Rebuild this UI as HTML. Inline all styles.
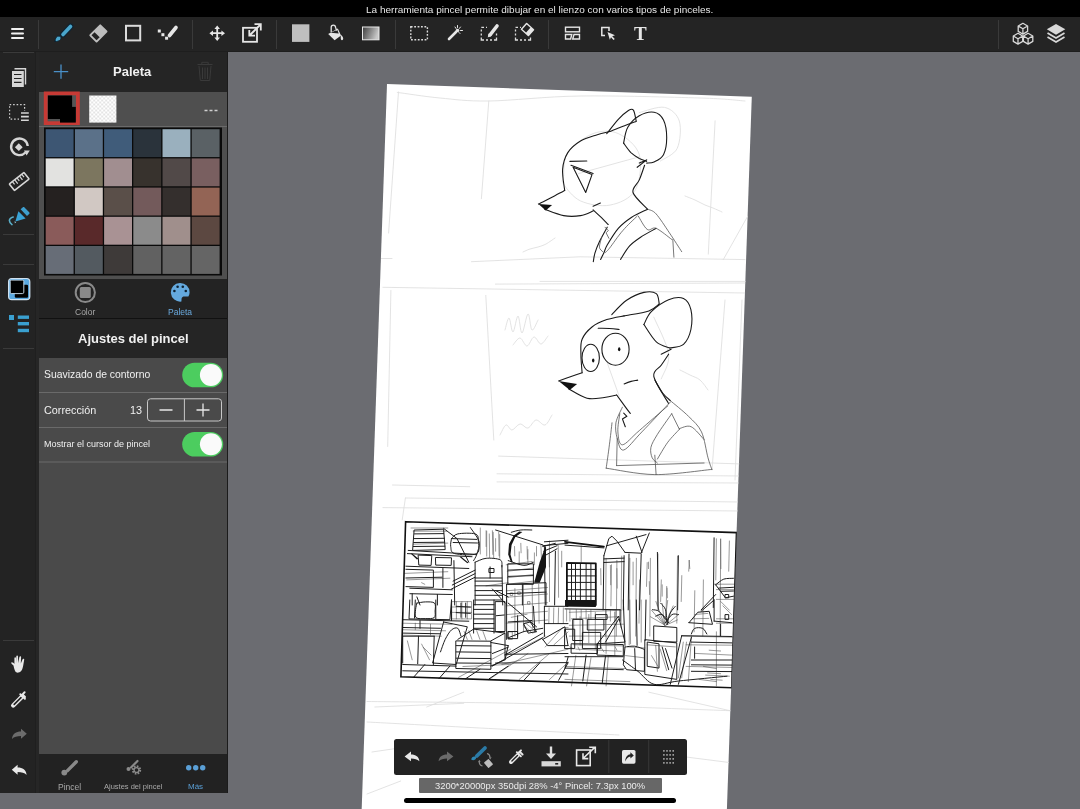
<!DOCTYPE html>
<html><head><meta charset="utf-8">
<style>
*{margin:0;padding:0;box-sizing:border-box}
html,body{width:1080px;height:809px;overflow:hidden;background:#6b6c71;font-family:"Liberation Sans",sans-serif}
.a{position:absolute}
svg{position:absolute;overflow:visible}
.txt{position:absolute;white-space:nowrap;line-height:1;will-change:transform}
</style></head><body>

<!-- canvas paper -->
<div class="a" id="paper" style="left:387px;top:84px;width:365px;height:800px;background:#fff;transform-origin:0 0;transform:rotate(2deg)">
</div>

<!--CANVAS--><svg class="a" id="cv" style="left:0;top:0" width="1080" height="809" viewBox="0 0 1080 809">
<defs><clipPath id="pc"><path d="M387 84L752 97L727.3 809L362.2 809Z"/></clipPath></defs>
<g clip-path="url(#pc)">
<g fill="none" stroke="#dedede" stroke-width="0.85" stroke-linecap="round"><path d="M397.3 92.4 C404.4 93.3 424.8 96.6 440.0 98.0 C455.2 99.4 465.5 101.3 488.8 101.0 C512.1 100.7 544.8 96.5 580.0 96.0 C615.2 95.5 672.5 97.2 700.0 98.0 C727.5 98.8 737.5 100.5 745.0 101.0"/><path d="M398.5 92.0 L388.6 233.0"/><path d="M488.8 101.0 L481.4 198.7"/><path d="M471.5 261.7 L580.0 256.8 L745.0 259.6"/><path d="M380.0 258.5 L392.0 258.5"/><path d="M715.1 120.8 L708.3 254.1"/><path d="M747.8 216.0 L723.3 259.6"/><path d="M540.0 281.4 L750.5 281.4"/><path d="M523.0 252.0 C524.2 251.5 527.5 249.8 530.0 249.0 C532.5 248.2 535.3 247.8 538.0 247.0 C540.7 246.2 543.2 245.5 546.0 244.0 C548.8 242.5 553.5 239.0 555.0 238.0"/><path d="M685.0 196.0 C686.7 196.7 691.7 198.5 695.0 200.0 C698.3 201.5 702.0 203.7 705.0 205.0 C708.0 206.3 710.2 206.8 713.0 208.0 C715.8 209.2 720.5 211.3 722.0 212.0"/><path d="M639.3 112.6 C643.5 111.7 657.9 106.0 664.6 107.4 C671.2 108.8 677.2 114.2 679.3 121.0 C681.4 127.9 680.3 141.7 677.2 148.4 C674.0 155.0 663.2 158.9 660.4 161.0"/><path d="M563.6 175.7 C564.3 170.4 562.9 159.6 567.8 152.6 C572.8 145.6 584.7 136.8 593.1 133.6 C601.5 130.5 610.6 130.1 618.3 133.6 C626.0 137.1 636.5 145.2 639.3 154.7 C642.1 164.1 640.0 182.0 635.1 190.4 C630.2 198.8 619.0 203.4 609.9 205.1 C600.8 206.9 588.2 204.4 580.5 200.9 C572.8 197.4 566.4 188.3 563.6 184.1 C560.8 179.9 562.9 181.0 563.6 175.7"/><path d="M578.4 173.6 L639.3 156.8"/><path d="M382.9 287.3 L745.0 293.0"/><path d="M495.4 284.1 L745.0 283.0"/><path d="M390.9 290.5 L387.7 446.5"/><path d="M485.8 295.4 L493.8 440.0"/><path d="M498.6 456.1 L742.0 464.0"/><path d="M497.0 473.8 L742.0 476.0"/><path d="M497.0 481.9 L742.0 483.0"/><path d="M392.5 485.0 L469.7 486.7"/><path d="M405.4 498.0 L740.0 502.0"/><path d="M382.9 507.6 L740.0 511.0"/><path d="M405.4 498.0 L402.2 520.0"/><path d="M725.0 300.0 L712.0 470.0"/><path d="M742.0 300.0 L735.0 480.0"/><path d="M505.0 330.0 C505.7 328.0 507.7 317.7 509.0 318.0 C510.3 318.3 511.5 332.3 513.0 332.0 C514.5 331.7 516.5 315.8 518.0 316.0 C519.5 316.2 520.3 333.3 522.0 333.0 C523.7 332.7 526.3 314.5 528.0 314.0 C529.7 313.5 530.3 329.0 532.0 330.0 C533.7 331.0 537.0 321.7 538.0 320.0"/><path d="M513.0 345.0 C514.2 343.8 517.7 337.8 520.0 338.0 C522.3 338.2 524.7 346.2 527.0 346.0 C529.3 345.8 531.7 337.3 534.0 337.0 C536.3 336.7 538.7 344.2 541.0 344.0 C543.3 343.8 546.8 337.3 548.0 336.0"/><path d="M500.0 435.0 C501.0 433.3 504.0 425.8 506.0 425.0 C508.0 424.2 509.7 430.2 512.0 430.0 C514.3 429.8 517.3 424.3 520.0 424.0 C522.7 423.7 525.3 428.7 528.0 428.0 C530.7 427.3 533.2 420.5 536.0 420.0 C538.8 419.5 542.3 425.8 545.0 425.0 C547.7 424.2 550.8 416.7 552.0 415.0"/><path d="M680.0 370.0 C681.7 370.8 686.7 373.3 690.0 375.0 C693.3 376.7 697.0 377.5 700.0 380.0 C703.0 382.5 706.7 388.3 708.0 390.0"/><path d="M653.8 317.1 C656.3 323.3 667.4 343.9 668.6 354.2 C669.9 364.5 662.5 374.8 661.2 378.9"/><path d="M606.8 361.6 L619.2 396.2"/><path d="M367.0 701.5 C389.2 701.8 461.2 702.2 500.0 703.0 C538.8 703.8 561.7 704.7 600.0 706.0 C638.3 707.3 708.3 709.9 730.0 710.7"/><path d="M367.0 722.0 C385.8 723.0 438.0 725.8 480.0 728.0 C522.0 730.2 595.8 733.8 619.0 735.0"/><path d="M463.7 692.2 L426.7 707.0"/><path d="M374.8 707.0 L463.7 703.3"/><path d="M648.9 692.2 L730.0 710.7"/><path d="M367.0 794.0 L400.7 781.0"/><path d="M686.0 757.0 L730.0 762.6"/><path d="M372.0 752.0 L420.0 745.0"/></g>
<g fill="none" stroke="#555" stroke-width="0.6" stroke-linecap="round"><path d="M486.1 530.7 L486.1 546.5"/><path d="M489.3 533.9 L489.6 557.5"/><path d="M492.4 530.7 L492.8 554.4"/><path d="M495.6 538.6 L495.6 551.2"/><path d="M498.7 532.3 L499.1 555.9"/><path d="M514.5 546.5 L514.8 555.9"/><path d="M520.8 543.3 L521.1 552.8"/><path d="M527.1 546.5 L527.4 559.1"/><path d="M536.5 546.5 L536.5 555.9"/><path d="M561.7 551.2 L561.7 566.9"/><path d="M549.1 554.4 L549.4 566.9"/><path d="M486.1 585.8 L508.2 582.7"/><path d="M421.6 582.7 L424.8 584.3"/><path d="M648.5 562.1 L648.5 568.6"/><path d="M689.0 560.5 L689.8 568.6"/><path d="M662.2 584.8 L662.2 596.2"/><path d="M667.1 588.1 L667.4 597.8"/><path d="M610.4 565.4 L610.7 584.8"/><path d="M616.9 568.6 L617.2 588.1"/><path d="M633.1 562.1 L633.1 584.8"/><path d="M649.3 581.6 L649.6 594.5"/><path d="M581.2 545.9 L581.2 562.1"/><path d="M600.7 568.6 L601.0 584.8"/><path d="M720.6 539.4 L720.9 568.6"/><path d="M407.4 640.9 L412.2 659.8"/><path d="M421.6 644.1 L429.5 659.8"/><path d="M423.2 647.2 L431.1 655.1"/><path d="M464.1 631.5 L467.3 639.4"/><path d="M468.8 630.7 L472.0 639.4"/><path d="M476.7 630.7 L479.9 639.4"/><path d="M483.0 631.5 L486.1 640.1"/><path d="M549.1 607.9 L548.8 623.6"/><path d="M553.8 607.9 L553.5 623.6"/><path d="M558.6 607.9 L558.2 623.6"/><path d="M563.3 607.9 L563.3 623.6"/><path d="M523.9 626.8 L528.6 631.5"/><path d="M511.3 617.3 L527.1 614.2"/><path d="M506.2 564.8 L532.2 561.5"/><path d="M507.3 571.3 L533.3 568.0"/><path d="M507.3 577.8 L533.3 574.5"/><path d="M507.3 584.3 L534.4 581.0"/><path d="M506.2 590.8 L547.4 587.5"/><path d="M506.2 597.3 L547.4 594.0"/><path d="M506.2 605.9 L547.4 602.7"/><path d="M506.2 614.6 L547.4 611.3"/><path d="M506.2 623.2 L547.4 620.0"/><path d="M514.9 588.6 L514.9 636.2"/><path d="M523.5 584.3 L523.5 631.9"/><path d="M532.2 584.3 L532.6 627.6"/><path d="M538.7 584.3 L539.1 623.2"/><path d="M510.6 592.9 L512.7 592.9 L512.7 595.5 L510.6 595.5Z"/><path d="M518.1 591.8 L520.3 591.8 L520.3 594.4 L518.1 594.4Z"/><path d="M527.9 601.6 L530.0 601.6 L530.0 604.2 L527.9 604.2Z"/><path d="M508.8 631.9 L512.3 631.9 L512.3 639.5 L508.8 639.5Z"/><path d="M525.7 623.2 L536.5 631.9 L532.2 633.0 L523.5 625.4Z"/><path d="M452.1 601.6 L471.6 601.6 L471.6 618.9 L452.1 618.9Z"/><path d="M456.4 601.6 L456.4 618.9"/><path d="M461.9 601.6 L461.9 618.9"/><path d="M467.3 601.6 L467.3 618.9"/><path d="M452.1 607.0 L471.6 607.0"/><path d="M452.1 612.4 L471.6 612.4"/><path d="M411.0 528.0 L447.8 528.0"/><path d="M413.2 531.2 L446.7 531.2"/><path d="M413.2 544.2 L447.8 543.1"/><path d="M404.5 573.4 L447.8 571.7"/><path d="M406.7 579.9 L449.9 578.2"/><path d="M402.3 623.2 L452.1 624.3"/><path d="M402.3 629.7 L445.6 630.8"/><path d="M402.3 635.1 L441.3 636.2"/><path d="M415.3 623.2 L415.3 629.7"/><path d="M430.5 624.3 L430.5 635.1"/><path d="M480.3 528.0 L480.3 554.0"/><path d="M486.7 531.2 L486.7 556.1"/><path d="M493.2 532.3 L493.7 558.3"/><path d="M499.7 534.5 L499.7 558.3"/><path d="M540.9 545.3 L541.9 569.1"/><path d="M549.5 541.0 L549.5 601.6"/><path d="M558.2 545.3 L558.6 597.3"/><path d="M519.2 551.8 L519.2 564.8"/><path d="M527.9 549.6 L527.9 562.6"/><path d="M534.4 552.9 L534.4 564.8"/><path d="M458.6 677.3 L510.6 649.2"/><path d="M488.9 679.5 L527.9 653.5"/><path d="M519.2 679.5 L549.5 653.5"/><path d="M549.5 679.5 L568.1 662.2"/><path d="M506.2 655.7 L545.2 636.2"/><path d="M501.9 664.4 L568.1 649.2"/><path d="M462.9 666.5 L510.6 664.4"/><path d="M553.8 644.9 L568.1 631.9"/><path d="M545.2 647.0 L562.5 627.6 L568.1 627.6"/><path d="M606.1 558.3 L605.4 636.1"/><path d="M611.5 564.8 L610.9 605.9"/><path d="M616.9 560.4 L616.3 636.1"/><path d="M621.7 556.1 L621.0 627.5"/><path d="M629.9 558.3 L629.2 644.8"/><path d="M636.4 558.3 L635.7 636.1"/><path d="M639.6 579.9 L639.0 623.2"/><path d="M647.2 562.6 L646.5 586.4"/><path d="M650.4 558.3 L649.8 636.1"/><path d="M658.0 553.9 L657.4 605.9"/><path d="M661.3 579.9 L660.6 601.5"/><path d="M666.7 586.4 L666.0 616.7"/><path d="M677.5 556.1 L676.8 623.2"/><path d="M681.8 575.6 L681.2 601.5"/><path d="M689.4 560.4 L688.7 571.2"/><path d="M694.8 590.7 L694.1 631.8"/><path d="M703.4 579.9 L702.8 636.1"/><path d="M716.4 538.8 L715.8 579.9"/><path d="M720.7 538.8 L720.1 636.1"/><path d="M729.4 541.0 L728.7 571.2"/><path d="M664.5 625.3 L651.5 610.2"/><path d="M664.5 625.3 L655.9 601.5"/><path d="M664.5 625.3 L662.3 603.7"/><path d="M664.5 624.2 L667.7 600.4"/><path d="M664.9 624.2 L673.2 605.9"/><path d="M665.6 625.3 L678.6 614.5"/><path d="M665.6 625.3 L677.5 619.9"/><path d="M663.4 624.2 L650.4 616.7"/><path d="M663.4 623.2 L658.0 614.5"/><path d="M681.8 636.1 L733.7 637.2"/><path d="M686.1 644.8 L733.7 645.2"/><path d="M694.8 653.4 L733.7 655.2"/><path d="M686.1 666.4 L733.7 667.5"/><path d="M716.4 631.8 L716.4 685.9"/><path d="M691.5 636.1 L688.3 681.6"/><path d="M714.3 584.2 L733.7 584.2"/><path d="M716.4 589.6 L733.7 589.6"/><path d="M716.4 599.4 L733.7 599.4"/><path d="M716.4 618.8 L733.7 618.8"/><path d="M716.4 623.2 L733.7 623.2"/><path d="M720.7 601.5 L729.4 610.2"/><path d="M722.9 605.9 L731.6 614.5"/><path d="M694.8 614.5 L707.8 613.4"/><path d="M692.6 618.8 L708.8 618.4"/><path d="M569.3 612.3 L621.2 610.2"/><path d="M571.5 618.8 L619.1 616.7"/><path d="M569.3 625.3 L623.4 624.2"/><path d="M569.3 636.1 L623.4 636.1"/><path d="M573.7 644.8 L623.4 645.9"/><path d="M575.8 649.1 L621.2 651.3"/><path d="M573.7 618.8 L573.7 636.1"/><path d="M580.1 616.7 L580.1 644.8"/><path d="M588.8 614.5 L588.8 642.6"/><path d="M595.3 612.3 L595.3 649.1"/><path d="M606.1 610.2 L606.1 653.4"/><path d="M614.8 612.3 L614.8 655.6"/><path d="M627.7 646.9 L645.0 648.0"/><path d="M625.6 655.6 L644.0 657.8"/><path d="M647.2 644.8 L675.3 646.9"/><path d="M651.5 655.6 L658.0 666.4"/><path d="M660.2 649.1 L666.7 670.7"/><path d="M565.0 666.4 L625.6 668.6"/><path d="M565.0 679.4 L629.9 681.6"/><path d="M575.8 655.6 L571.5 685.9"/><path d="M591.0 657.8 L586.6 685.9"/><path d="M608.3 655.6 L606.1 685.9"/><path d="M703.4 666.4 L716.4 668.6"/><path d="M705.6 675.1 L729.4 676.2"/><path d="M699.1 679.4 L716.4 681.6"/><path d="M566.6 609.7 L566.6 621.1"/><path d="M569.9 609.7 L569.9 621.1"/><path d="M576.3 609.7 L576.3 619.4"/><path d="M581.2 609.7 L581.2 619.4"/><path d="M586.1 609.7 L586.1 619.4"/><path d="M590.9 609.7 L590.9 619.4"/><path d="M610.4 609.7 L610.4 621.1"/><path d="M615.2 609.7 L615.2 621.1"/><path d="M629.8 600.0 L630.6 643.8"/><path d="M641.2 600.0 L641.2 642.1"/><path d="M655.7 645.4 L657.4 671.3"/><path d="M683.3 642.1 L678.4 677.8"/><path d="M686.5 642.1 L681.7 677.8"/><path d="M709.2 650.2 L720.6 651.0"/><path d="M707.6 672.9 L720.6 673.7"/><path d="M710.8 679.4 L722.2 680.2"/><path d="M569.9 647.0 L573.1 648.6"/><path d="M578.0 647.0 L579.6 650.2"/><path d="M600.7 647.0 L603.9 651.9"/><path d="M615.2 647.0 L616.9 650.2"/></g>
<g fill="none" stroke="#1e1e1e" stroke-width="1.0" stroke-linecap="round" stroke-linejoin="round"><path d="M414.5 530.0 L443.6 529.2 L445.2 549.6 L413.0 550.4Z"/><path d="M414.5 533.9 L443.6 533.6"/><path d="M413.7 538.6 L444.4 538.3"/><path d="M413.7 542.5 L444.7 542.2"/><path d="M413.4 546.5 L444.9 546.2"/><path d="M443.6 528.4 L457.0 538.6 L468.8 562.2"/><path d="M451.5 538.6 C452.6 537.8 453.9 534.7 457.8 533.9 C461.7 533.1 471.7 532.8 475.1 533.9 C478.5 534.9 478.0 536.9 478.3 540.2 C478.5 543.5 480.6 551.3 476.7 553.6 C472.8 555.8 459.0 554.7 454.7 553.6 C450.3 552.4 451.3 549.0 450.7 546.5 C450.2 544.0 451.4 539.9 451.5 538.6"/><path d="M452.3 538.6 L476.7 539.4"/><path d="M453.1 542.5 L477.5 543.0"/><path d="M470.4 527.6 C471.8 530.0 478.0 537.3 479.1 541.8 C480.1 546.2 477.6 551.2 476.7 554.4 C475.8 557.5 474.1 559.6 473.6 560.6"/><path d="M408.2 550.4 L476.7 554.4"/><path d="M407.4 553.6 L472.0 556.7"/><path d="M418.5 555.1 L431.8 555.6 L431.1 565.4 L419.2 565.1Z"/><path d="M435.8 557.5 L451.5 557.8 L451.2 565.4 L436.1 565.1Z"/><path d="M405.9 566.2 L468.8 568.5"/><path d="M405.9 569.3 L433.4 570.1 L433.4 587.4 L405.9 586.6"/><path d="M405.9 578.0 L442.1 577.2"/><path d="M442.9 568.5 L442.9 587.4"/><path d="M453.9 560.6 L454.7 605.0"/><path d="M453.1 581.1 L475.1 570.1"/><path d="M451.5 589.0 L475.1 577.2"/><path d="M452.3 585.0 L475.1 573.6"/><path d="M409.8 588.2 L452.3 589.8"/><path d="M409.8 593.7 L452.3 594.5"/><path d="M412.2 593.7 L412.2 605.0"/><path d="M437.4 594.5 L437.4 605.0"/><path d="M416.9 596.9 L420.0 605.0"/><path d="M475.1 562.2 C477.0 561.6 481.9 558.7 486.1 558.3 C490.3 557.9 497.7 558.4 500.3 559.9 C502.9 561.3 501.6 565.8 501.9 566.9"/><path d="M475.1 562.2 L475.1 605.0"/><path d="M501.9 565.4 L502.7 605.0"/><path d="M475.1 578.0 L501.9 578.0"/><path d="M475.1 581.1 L501.9 581.1"/><path d="M475.1 585.8 L501.9 585.8"/><path d="M475.1 590.6 L501.9 590.6"/><path d="M475.1 595.3 L501.9 595.3"/><path d="M475.1 600.0 L501.9 600.0"/><path d="M490.1 566.9 L490.1 578.0"/><path d="M489.3 568.5 L494.0 568.5 L494.0 572.5 L489.3 572.5Z"/><path d="M508.2 560.6 C510.8 561.4 519.7 565.1 523.9 565.4 C528.1 565.6 531.8 562.7 533.4 562.2"/><path d="M495.6 530.0 L542.8 544.9"/><path d="M511.3 532.3 C512.9 531.9 517.4 530.3 520.8 530.0 C524.2 529.6 530.0 530.0 531.8 530.0"/><path d="M508.2 563.8 L533.4 563.8 L533.4 584.3 L508.2 584.3Z"/><path d="M508.2 570.1 L533.4 569.3"/><path d="M508.2 576.4 L533.4 575.6"/><path d="M506.6 584.3 L546.0 582.7 L546.0 605.0"/><path d="M506.6 584.3 L506.6 605.0"/><path d="M522.4 584.3 L522.4 605.0"/><path d="M506.6 593.7 L546.0 592.1"/><path d="M492.4 589.0 L505.0 603.1"/><path d="M495.6 590.6 L508.2 596.9"/><path d="M544.4 541.8 L568.0 540.2"/><path d="M542.8 545.7 L568.0 543.3"/><path d="M542.8 546.5 L555.4 543.3"/><path d="M543.6 551.2 L557.0 545.7"/><path d="M544.4 555.9 L557.0 548.8"/><path d="M544.4 546.5 L545.2 605.0"/><path d="M555.4 551.2 L554.6 605.0"/><path d="M565.0 545.1 L603.9 547.9"/><path d="M603.9 555.7 L608.8 538.6 L612.0 536.2 L616.9 541.1 L625.0 552.4"/><path d="M625.0 552.4 L641.2 553.2 L649.3 533.0"/><path d="M606.3 545.9 L646.0 534.6"/><path d="M636.3 536.2 L642.0 552.4"/><path d="M603.9 555.7 L603.1 609.9"/><path d="M624.1 555.7 L623.3 609.9"/><path d="M629.0 554.0 L628.2 609.9"/><path d="M641.2 554.0 L639.5 609.9"/><path d="M603.9 558.9 L624.1 558.1"/><path d="M603.9 562.5 L624.1 561.6"/><path d="M657.4 552.4 L658.2 609.9"/><path d="M678.4 555.7 L677.6 609.9"/><path d="M714.1 537.8 L713.3 607.5"/><path d="M715.7 584.8 C717.1 583.9 720.8 580.2 723.8 579.1 C726.8 578.1 731.9 578.5 733.5 578.3"/><path d="M715.7 584.8 L725.4 597.8 L733.5 596.2"/><path d="M718.9 588.1 L733.5 587.3"/><path d="M720.6 591.3 L733.5 591.0"/><path d="M701.1 609.9 L715.7 594.5"/><path d="M725.4 594.5 L728.7 594.5 L728.7 597.8 L725.4 597.8Z"/><path d="M571.5 563.4 L571.5 604.3"/><path d="M575.5 563.4 L575.5 604.3"/><path d="M580.4 563.4 L580.4 604.3"/><path d="M586.1 563.4 L586.1 604.3"/><path d="M590.9 563.4 L590.9 604.3"/><path d="M566.9 569.4 L595.8 569.4"/><path d="M566.9 575.9 L595.8 575.9"/><path d="M566.9 582.4 L595.8 582.4"/><path d="M566.9 589.7 L595.8 589.7"/><path d="M566.9 596.2 L595.8 596.2"/><path d="M566.9 601.0 L595.8 601.0"/><path d="M409.8 600.0 L409.0 618.9 L449.9 619.7 L451.5 600.0"/><path d="M415.3 600.0 L414.5 618.1"/><path d="M435.8 600.0 L435.8 618.9"/><path d="M416.9 603.1 C418.3 602.9 422.6 601.9 425.5 601.9 C428.5 601.9 432.9 601.6 434.5 603.1 C436.1 604.7 435.2 608.6 435.1 611.0 C435.1 613.4 435.8 616.4 434.2 617.6 C432.6 618.9 428.6 618.6 425.5 618.6 C422.5 618.6 417.8 619.2 416.1 617.6 C414.4 616.1 415.5 611.9 415.6 609.4 C415.8 607.0 416.7 604.2 416.9 603.1"/><path d="M451.5 600.0 L451.5 620.5"/><path d="M473.6 600.0 L473.6 633.1"/><path d="M456.2 606.3 L470.4 607.1"/><path d="M456.2 612.6 L470.4 613.4"/><path d="M461.0 603.1 L461.0 617.3"/><path d="M465.7 603.1 L465.7 617.3"/><path d="M473.6 604.7 L494.0 604.7"/><path d="M473.6 609.4 L494.0 609.4"/><path d="M473.6 614.2 L494.0 614.2"/><path d="M473.6 618.9 L494.0 618.9"/><path d="M473.6 623.6 L494.0 623.6"/><path d="M473.6 628.3 L494.0 628.3"/><path d="M494.0 600.0 L494.0 633.1"/><path d="M495.6 601.6 L505.0 601.6 L505.0 631.5 L495.6 631.5Z"/><path d="M496.4 615.7 L504.2 615.0"/><path d="M402.7 619.7 L468.8 621.2"/><path d="M402.7 627.5 L440.5 628.3"/><path d="M402.7 633.1 L440.5 633.8"/><path d="M402.7 636.2 L434.2 636.2"/><path d="M420.0 620.5 L420.0 628.3"/><path d="M402.7 636.2 L402.7 663.0"/><path d="M418.5 636.2 L417.7 663.7"/><path d="M434.2 636.2 L433.4 664.5"/><path d="M443.6 622.0 L432.6 663.0 L456.2 664.5 L467.3 626.8 L443.6 622.0Z"/><path d="M440.5 651.9 C441.3 649.8 443.4 643.0 445.2 639.4 C447.1 635.7 449.4 631.7 451.5 629.9 C453.6 628.1 456.2 627.3 457.8 628.3 C459.4 629.4 460.4 634.9 461.0 636.2"/><path d="M456.2 640.9 L490.9 641.2 L490.9 669.3 L456.2 668.5Z"/><path d="M457.8 639.4 L473.6 629.1 L505.0 633.1 L490.9 640.9"/><path d="M456.2 645.6 L490.9 646.0"/><path d="M456.2 651.9 L490.9 652.3"/><path d="M456.2 658.2 L490.9 658.6"/><path d="M456.2 663.0 L490.9 663.3"/><path d="M490.9 642.5 L508.2 645.6"/><path d="M490.9 666.1 L505.0 659.8 L508.2 645.6"/><path d="M492.4 653.5 L508.2 647.2"/><path d="M505.0 633.1 L505.0 659.8"/><path d="M508.2 603.1 L536.5 626.8"/><path d="M506.6 600.0 L506.6 639.4"/><path d="M517.6 615.7 L517.6 636.2"/><path d="M533.4 606.3 L534.9 631.5"/><path d="M508.2 622.0 L531.8 620.5"/><path d="M508.2 637.8 L523.9 631.5 L542.8 628.3"/><path d="M523.9 623.6 L530.2 622.0 L536.5 631.5 L528.6 633.1Z"/><path d="M402.7 664.5 L456.2 666.1"/><path d="M402.7 670.8 L568.0 674.0"/><path d="M492.4 666.1 L542.8 637.8"/><path d="M505.0 655.1 L542.8 633.1"/><path d="M505.0 654.3 L568.0 653.5"/><path d="M495.6 663.0 L568.0 662.6"/><path d="M413.7 677.1 L424.8 664.5"/><path d="M438.9 678.7 L449.9 666.1"/><path d="M465.7 678.7 L479.9 669.3"/><path d="M489.3 678.7 L508.2 666.1"/><path d="M523.9 680.3 L539.7 663.0"/><path d="M558.6 680.3 L568.0 663.0"/><path d="M544.4 606.3 L568.0 606.3"/><path d="M544.4 606.3 L544.4 636.2"/><path d="M544.4 623.6 L568.0 623.6"/><path d="M542.8 639.4 L564.9 626.8 L568.0 645.6"/><path d="M542.8 639.4 L547.5 645.6 L568.0 645.6"/><path d="M508.2 631.5 L517.6 631.5 L517.6 638.6 L508.2 638.6Z"/><path d="M565.0 608.9 L620.1 609.7"/><path d="M620.1 609.7 L620.1 621.1"/><path d="M573.1 619.4 L582.8 619.4 L582.8 640.5 L573.1 640.5Z"/><path d="M587.7 619.4 L603.9 619.4 L603.9 630.0 L587.7 630.0Z"/><path d="M595.8 614.6 L607.1 614.6 L607.1 619.4 L595.8 619.4Z"/><path d="M565.0 629.2 L574.7 629.2 L574.7 648.6 L565.0 648.6Z"/><path d="M582.8 632.4 L600.7 632.4 L600.7 648.6 L582.8 648.6Z"/><path d="M597.4 643.8 L618.5 616.2 L625.0 642.1 L597.4 643.8Z"/><path d="M605.5 642.1 L618.5 619.4"/><path d="M571.5 643.8 L597.4 644.1 L597.4 653.5 L571.5 653.2Z"/><path d="M597.4 643.8 L623.3 644.6 L623.3 655.9 L597.4 655.1Z"/><path d="M623.3 600.0 L625.0 645.4"/><path d="M636.3 600.0 L637.1 645.4"/><path d="M646.0 600.0 L645.2 640.5"/><path d="M652.5 609.7 C653.6 610.0 656.8 609.7 659.0 611.3 C661.1 613.0 664.4 618.1 665.5 619.4"/><path d="M655.7 616.2 C656.8 615.9 660.1 613.5 662.2 614.6 C664.4 615.7 667.6 621.3 668.7 622.7"/><path d="M660.6 603.2 C661.4 604.3 664.4 606.2 665.5 609.7 C666.6 613.2 666.8 621.9 667.1 624.3"/><path d="M678.4 614.6 C677.4 614.6 674.1 613.2 672.0 614.6 C669.8 615.9 666.6 621.3 665.5 622.7"/><path d="M675.2 606.5 C674.4 607.6 671.7 610.0 670.3 613.0 C669.0 615.9 667.6 622.4 667.1 624.3"/><path d="M654.1 625.9 L676.8 627.5 L676.8 642.1 L654.1 641.3Z"/><path d="M645.2 639.7 L676.8 642.9 L676.8 679.4 L645.2 674.5Z"/><path d="M647.6 642.1 L659.0 643.8 L659.0 668.1 L647.6 666.4Z"/><path d="M662.2 647.0 L668.7 669.7"/><path d="M665.5 648.6 L672.0 668.1"/><path d="M625.0 647.0 C626.6 646.9 631.4 645.8 634.7 646.2 C637.9 646.6 642.8 648.9 644.4 649.4"/><path d="M625.0 647.0 L623.3 664.8 L626.6 669.7 L644.4 671.3 L644.4 649.4"/><path d="M634.7 648.6 L635.5 669.7"/><path d="M622.5 660.0 C625.1 661.8 632.7 667.3 637.9 671.3 C643.2 675.4 647.4 682.6 654.1 684.3 C660.9 685.9 666.3 682.4 678.4 681.0 C690.6 679.7 718.9 677.0 727.0 676.2"/><path d="M689.0 622.7 L697.9 612.2 L709.2 611.3 L712.5 624.3 L689.0 622.7Z"/><path d="M691.4 634.0 C691.9 633.1 692.7 629.3 694.6 628.4 C696.5 627.4 700.7 627.4 702.7 628.4 C704.8 629.3 706.1 633.1 706.8 634.0"/><path d="M701.1 611.3 L714.1 600.0"/><path d="M681.7 635.7 L731.9 636.5"/><path d="M681.7 635.7 L670.3 684.3"/><path d="M691.4 637.3 L678.4 684.3"/><path d="M691.4 642.1 L731.9 642.9"/><path d="M691.4 660.0 L731.9 660.0"/><path d="M691.4 664.8 L731.9 665.1"/><path d="M691.4 671.3 L731.9 671.6"/><path d="M714.1 600.0 L714.1 621.1"/><path d="M714.1 621.1 L731.9 622.7"/><path d="M720.6 624.3 L720.6 635.7"/><path d="M725.4 614.6 L728.7 614.6 L728.7 619.4 L725.4 619.4Z"/><path d="M565.0 656.7 L623.3 656.7"/><path d="M565.0 668.1 L623.3 669.7"/><path d="M586.1 655.1 L582.8 681.0"/><path d="M605.5 655.9 L602.3 682.6"/><path d="M568.2 656.7 L565.0 668.1"/><path d="M694.6 647.0 L694.6 658.3"/></g>
<g fill="none" stroke="#111" stroke-width="1.8" stroke-linecap="round" stroke-linejoin="round"><path d="M565.0 541.9 L603.9 546.7"/><path d="M566.9 562.9 L595.8 563.4 L595.8 605.1 L566.9 604.6Z"/></g>
<g fill="#151515"><path d="M519.2 531.5 L513.7 535.5 L509.0 544.1 L508.2 554.4 L511.0 562.2 L512.6 561.9 L510.5 554.4 L511.6 544.9 L515.3 537.0 L522.4 532.0Z"/><path d="M546.0 544.9 L539.7 562.2 L534.2 582.7 L539.7 582.7 L546.0 566.9Z"/><path d="M410.6 553.6 L412.2 553.6 L418.5 558.8 L416.9 559.4Z"/><path d="M459.4 556.7 L461.0 556.4 L468.5 562.7 L467.3 563.3Z"/><path d="M566.3 602.3 L595.8 603.0 L595.8 606.9 L566.3 606.4Z"/><path d="M565.0 600.0 L595.8 600.0 L595.8 606.5 L565.0 606.2Z"/></g>
<path d="M405.6 521.7 L736.5 532.6 L731.8 687.7 L400.9 676.8Z" fill="none" stroke="#111" stroke-width="1.6"/>
<g fill="none" stroke="#1a1a1a" stroke-width="1.1" stroke-linecap="round" stroke-linejoin="round"><path d="M544.7 209.3 C547.9 210.4 557.7 214.6 563.6 215.6 C569.6 216.7 575.6 216.4 580.5 215.6 C585.4 214.9 591.0 211.8 593.1 211.0"/><path d="M593.1 209.8 C594.5 211.1 599.0 215.3 601.5 217.7 C604.0 220.2 607.1 223.4 608.2 224.5"/><path d="M538.4 204.1 C540.5 203.0 546.6 200.0 551.0 197.8 C555.4 195.5 562.4 191.6 564.7 190.4"/><path d="M564.7 190.4 C564.3 186.9 562.1 175.7 562.6 169.4 C563.1 163.1 564.9 157.3 567.8 152.6 C570.8 147.8 575.6 144.0 580.5 141.0 C585.4 138.0 592.4 136.3 597.3 134.7 C602.2 133.1 607.8 132.1 609.9 131.5"/><path d="M606.7 133.6 C608.7 131.3 614.7 123.2 618.3 119.3 C621.9 115.5 625.9 112.1 628.4 110.5 C630.9 109.0 632.2 108.3 633.4 110.1 C634.7 111.8 635.7 119.2 636.2 121.0"/><path d="M636.2 121.4 C634.3 122.1 629.0 124.0 624.6 125.7 C620.2 127.3 612.4 130.6 609.9 131.5"/><path d="M623.6 143.1 C624.3 140.5 625.1 131.9 627.8 127.3 C630.4 122.8 635.0 118.3 639.3 115.8 C643.7 113.2 650.0 111.5 654.1 112.2 C658.1 112.9 661.4 115.7 663.5 120.0 C665.6 124.3 666.7 132.1 666.7 137.8 C666.7 143.6 665.6 150.6 663.5 154.7 C661.4 158.7 656.9 160.6 654.1 162.0 C651.3 163.4 647.9 162.9 646.7 163.1"/><path d="M623.6 143.1 C624.8 144.7 628.3 150.0 630.9 152.6 C633.6 155.1 636.7 157.0 639.3 158.5 C642.0 159.9 645.5 160.9 646.7 161.4"/><path d="M637.2 167.3 L646.7 159.9 L639.3 163.1"/><path d="M644.6 165.2 C643.7 167.6 641.3 175.3 639.3 179.9 C637.4 184.5 631.6 187.6 633.0 192.5 C634.4 197.4 645.3 206.5 647.7 209.3"/><path d="M573.1 167.3 L592.0 174.6 L585.7 192.5 L573.1 167.3Z"/><path d="M569.9 161.4 L586.8 161.0"/><path d="M571.0 165.2 L593.1 173.6"/><path d="M593.1 206.2 L600.4 203.0"/><path d="M647.2 209.4 C644.6 210.7 636.5 214.1 631.7 217.2 C626.9 220.4 622.4 223.7 618.3 228.3 C614.3 233.0 609.6 240.9 607.2 245.0 C604.8 249.1 605.0 250.4 603.9 252.8 C602.8 255.2 601.1 258.3 600.6 259.4"/><path d="M607.2 227.2 C605.9 229.6 601.5 237.4 599.4 241.7 C597.4 245.9 596.0 249.4 595.0 252.8 C594.0 256.1 593.6 260.2 593.3 261.7"/><path d="M656.1 228.3 C653.5 229.8 645.0 234.3 640.6 237.2 C636.1 240.2 632.8 242.4 629.4 246.1 C626.1 249.8 622.0 257.2 620.6 259.4"/><path d="M568.5 388.8 C571.6 390.4 581.1 396.8 587.0 398.2 C593.0 399.6 599.4 398.0 604.3 397.5 C609.3 396.9 614.7 395.4 616.7 395.0"/><path d="M616.7 395.0 C618.4 397.3 624.3 405.5 626.6 408.6 C628.9 411.7 629.7 412.7 630.3 413.5"/><path d="M558.6 380.9 C560.5 380.2 565.8 378.3 569.7 376.9 C573.6 375.6 580.0 373.4 582.1 372.7"/><path d="M582.1 372.7 C581.9 369.6 580.9 359.7 580.9 354.2 C580.9 348.6 580.2 343.9 582.1 339.3 C583.9 334.8 587.9 330.3 592.0 327.0 C596.1 323.7 601.5 321.4 606.8 319.6 C612.2 317.7 621.2 316.5 624.1 315.9"/><path d="M611.8 314.6 C614.2 312.2 621.2 304.0 626.6 300.3 C632.0 296.6 639.0 293.5 643.9 292.4 C648.9 291.3 653.7 291.7 656.3 293.6 C658.8 295.5 658.7 301.8 659.2 303.5"/><path d="M659.2 304.0 C657.5 305.1 654.7 308.9 648.9 310.9 C643.0 312.9 628.3 315.0 624.1 315.9"/><path d="M643.9 324.5 C645.1 322.4 647.2 315.8 651.3 311.7 C655.5 307.5 663.3 302.0 668.6 299.8 C674.0 297.6 679.8 296.9 683.5 298.5 C687.2 300.2 689.7 304.5 690.9 309.7 C692.1 314.8 692.1 323.7 690.9 329.5 C689.7 335.2 687.0 341.2 683.5 344.3 C680.0 347.4 672.1 347.4 669.9 348.0"/><path d="M643.9 324.5 C646.0 327.4 651.9 337.9 656.3 341.8 C660.6 345.7 667.6 347.0 669.9 348.0"/><path d="M661.2 354.2 L671.1 349.2 L663.7 352.9"/><path d="M668.6 354.2 C667.4 356.0 663.7 361.6 661.2 365.3 C658.7 369.0 652.6 370.1 653.8 376.4 C655.0 382.8 666.2 399.1 668.6 403.6"/><path d="M598.2 328.2 C600.0 328.3 605.8 328.3 609.3 328.5 C612.8 328.7 617.5 329.3 619.2 329.5"/><path d="M624.1 383.9 C625.3 383.4 628.8 382.0 631.1 381.4 C633.3 380.8 636.6 380.4 637.7 380.1"/><path d="M623.7 413.1 L626.9 416.3 L622.4 418.9 L625.3 426.7"/><path d="M654.8 380.0 C656.1 382.2 660.0 389.5 662.6 393.0 C665.2 396.4 669.1 399.4 670.4 400.7"/></g>
<g fill="none" stroke="#555" stroke-width="0.8" stroke-linecap="round"><path d="M622.4 407.2 C621.3 409.8 616.8 417.6 615.9 422.8 C615.1 428.0 615.9 433.8 617.2 438.3 C618.5 442.9 619.6 451.1 623.7 450.0 C627.8 448.9 634.1 439.8 641.9 431.9 C649.6 423.9 665.6 407.0 670.4 402.0"/><path d="M619.8 413.7 C619.5 416.7 617.4 426.7 617.9 431.9 C618.3 437.0 618.8 445.0 622.4 444.8 C626.0 444.6 631.7 437.0 639.3 430.6 C646.8 424.1 663.0 410.0 667.8 405.9"/><path d="M670.4 400.7 C673.4 403.3 683.3 411.1 688.5 416.3 C693.7 421.5 698.2 424.9 701.5 431.9 C704.7 438.8 706.2 451.5 708.0 457.8 C709.7 464.0 711.2 467.5 711.9 469.4"/><path d="M671.7 413.7 C669.3 417.2 660.9 428.8 657.4 434.4 C654.0 440.1 651.8 443.5 650.9 447.4 C650.1 451.3 651.1 455.2 652.2 457.8 C653.3 460.4 656.5 462.1 657.4 463.0"/><path d="M671.7 413.7 L679.4 429.3"/><path d="M679.4 428.6 C681.4 428.3 687.0 424.8 691.1 426.7 C695.2 428.5 701.9 437.5 704.1 439.6"/><path d="M679.4 429.3 C677.5 431.4 671.5 437.3 667.8 442.2 C664.1 447.2 659.1 456.3 657.4 459.1"/><path d="M612.0 422.8 C611.6 426.5 610.4 437.3 609.4 444.8 C608.5 452.4 606.7 464.3 606.2 468.2"/><path d="M606.2 468.2 C614.3 469.2 637.2 474.4 654.8 474.6 C672.4 474.8 702.3 470.3 711.9 469.4"/><path d="M654.8 455.2 L656.1 474.6"/><path d="M617.2 438.3 L616.6 465.6"/><path d="M616.6 465.6 L704.1 463.0"/><path d="M637.2 216.1 C634.8 218.5 627.4 225.2 622.8 230.6 C618.1 235.9 612.4 244.6 609.4 248.3 C606.5 252.0 605.7 252.0 605.0 252.8"/><path d="M601.7 237.2 C601.3 238.9 599.3 244.8 599.4 247.2 C599.6 249.6 602.2 250.9 602.8 251.7"/><path d="M638.3 216.1 C639.8 218.3 644.3 227.4 647.2 229.4 C650.2 231.5 652.0 226.7 656.1 228.3 C660.2 230.0 669.1 237.6 671.7 239.4"/><path d="M648.3 209.4 C649.6 210.2 652.6 210.0 656.1 213.9 C659.6 217.8 665.2 226.5 669.4 232.8 C673.7 239.1 679.6 248.5 681.7 251.7"/><path d="M605.0 227.2 L608.3 230.6 L606.1 232.8 L608.9 238.3"/><path d="M672.8 239.4 L673.9 257.2"/></g>
<g fill="none" stroke="#1a1a1a" stroke-width="1.1"><ellipse cx="590.7" cy="357.9" rx="8.7" ry="13.6"/><ellipse cx="615.5" cy="349.2" rx="13.6" ry="16.0"/></g>
<g fill="#111"><ellipse cx="593.2" cy="360.4" rx="1.2" ry="2"/><ellipse cx="619.2" cy="349.2" rx="1.2" ry="2"/><path d="M538.4 204.1 L552.1 205.1 L545.8 210.4Z"/><path d="M558.6 380.9 L577.1 383.9 L569.7 390.0Z"/></g>
</g></svg><!--/CANVAS-->
<!-- status bar -->
<div class="a" style="left:0;top:0;width:1080px;height:17px;background:#000"></div>
<div class="txt" style="left:365.6px;top:5.5px;font-size:9.2px;color:#e6e6e6;transform-origin:0 0;transform:scaleX(1.09)">La herramienta pincel permite dibujar en el lienzo con varios tipos de pinceles.</div>

<!-- toolbar -->
<div class="a" style="left:0;top:17px;width:1080px;height:35px;background:#242424"></div><div class="a" style="left:0;top:51px;width:1080px;height:1px;background:#1e1e1e"></div>
<div class="a" style="left:38px;top:20px;width:1px;height:29px;background:#3a3a3a"></div>
<div class="a" style="left:192px;top:20px;width:1px;height:29px;background:#3a3a3a"></div>
<div class="a" style="left:276px;top:20px;width:1px;height:29px;background:#3a3a3a"></div>
<div class="a" style="left:395px;top:20px;width:1px;height:29px;background:#3a3a3a"></div>
<div class="a" style="left:548px;top:20px;width:1px;height:29px;background:#3a3a3a"></div>
<div class="a" style="left:998px;top:20px;width:1px;height:29px;background:#3a3a3a"></div>

<!-- left sidebar -->
<div class="a" style="left:0;top:52px;width:35px;height:741px;background:#232323"></div>
<div class="a" style="left:35px;top:52px;width:1px;height:741px;background:#1f1f1f"></div>
<div class="a" style="left:36px;top:52px;width:3px;height:741px;background:#262626"></div>

<!-- panel -->
<div class="a" style="left:39px;top:52px;width:188px;height:40px;background:#252525"></div>
<div class="a" style="left:227px;top:52px;width:1px;height:741px;background:#1b1b1b"></div>
<div class="a" style="left:39px;top:92px;width:188px;height:187px;background:#4f4f4f"></div>
<div class="a" style="left:39px;top:126px;width:188px;height:1px;background:#6a6a6a"></div>
<div class="a" style="left:39px;top:279px;width:188px;height:39px;background:#232323"></div>
<div class="a" style="left:39px;top:318px;width:188px;height:1px;background:#111"></div>
<div class="a" style="left:39px;top:319px;width:188px;height:39px;background:#252525"></div>
<div class="a" style="left:39px;top:358px;width:188px;height:396px;background:#4a4a4a"></div>
<div class="a" style="left:39px;top:754px;width:188px;height:39px;background:#222"></div>

<div class="txt" style="left:113px;top:65px;font-size:13px;font-weight:700;color:#f0f0f0">Paleta</div>
<div class="txt" style="left:78px;top:332px;font-size:13px;font-weight:700;color:#f0f0f0">Ajustes del pincel</div>


<svg class="a" style="left:0;top:0" width="1080" height="809" viewBox="0 0 1080 809">
<!-- hamburger -->
<g stroke="#f0f0f0" stroke-width="2" stroke-linecap="round">
<path d="M12 29H23M12 33.5H23M12 38H23"/>
</g>
<!-- brush blue -->
<g stroke-linecap="round">
<path d="M70.5 26.5L63 34.5" stroke="#0e2433" stroke-width="6"/>
<path d="M70.5 26.5L63 34.5" stroke="#4aa6cc" stroke-width="3.6"/>
<path d="M55 41.5C55 38 56.5 36 59 36C61 36 61.5 38 60.5 39.5C59.5 41 57 41.8 55 41.5Z" fill="#4aa6cc" stroke="#0e2433" stroke-width="1"/>
</g>
<!-- eraser -->
<g transform="translate(98.4 33.4) rotate(45)">
<rect x="-5.4" y="-8" width="10.8" height="16" fill="#bdbdbd" rx="1"/>
<rect x="-3.6" y="1.8" width="7.2" height="4.4" fill="#222"/>
</g>
<!-- rect -->
<rect x="126" y="25.8" width="14.2" height="14.6" fill="none" stroke="#dcdcdc" stroke-width="2"/>
<!-- dot line pencil -->
<g fill="#e6e6e6">
<rect x="157.8" y="29.5" width="3" height="3"/>
<rect x="161.4" y="33.2" width="3" height="3"/>
<rect x="165.1" y="36.7" width="3" height="3"/>
</g>
<path d="M169.5 35.5L176 27.5" stroke="#e6e6e6" stroke-width="3.6" stroke-linecap="round"/>
<path d="M168.8 36.3L170 32.8L172.5 34.8Z" fill="#e6e6e6"/>
<!-- move -->
<g fill="#e6e6e6">
<path d="M217.2 25.5L220 29H214.4Z M217.2 41L220 37.4H214.4Z M209.4 33.2L213 30.4V36Z M225 33.2L221.4 30.4V36Z"/>
</g>
<path d="M217.2 28V38.4M212 33.2H222.4" stroke="#e6e6e6" stroke-width="1.8"/>
<!-- resize -->
<rect x="243" y="27.8" width="14" height="14" fill="none" stroke="#e6e6e6" stroke-width="1.8"/>
<path d="M249.5 35.5L260.5 24.5M254.5 24.2H260.8V30.5M249.3 30V35.7H255" fill="none" stroke="#e6e6e6" stroke-width="1.8"/>
<!-- gray square -->
<rect x="292" y="24.3" width="17.4" height="17.6" fill="#bfbfbf"/>
<!-- bucket -->
<path d="M328.2 34L334.6 40.2L341 35.6L337.8 28.6Z" fill="#e6e6e6"/>
<path d="M330.8 32.8L337.2 29.8L338.8 33.6Z" fill="#222"/>
<path d="M331.2 32V27.2C331.2 24.4 335.4 24.2 335.6 27.4L336.6 30.6" fill="none" stroke="#e6e6e6" stroke-width="1.3"/>
<path d="M340.6 34.4C342.5 36 343.8 38 343 39.6C342 40.8 340.6 40 340.8 38Z" fill="#e6e6e6"/>
<!-- gradient -->
<defs><linearGradient id="gr" x1="0" x2="1" y1="0" y2="0.3"><stop offset="0" stop-color="#3d3d3d"/><stop offset="1" stop-color="#c8c8c8"/></linearGradient></defs>
<rect x="362.5" y="27" width="16.5" height="12.8" fill="url(#gr)" stroke="#eaeaea" stroke-width="1"/>
<!-- dashed rect -->
<rect x="410.8" y="26.8" width="16.6" height="13" fill="none" stroke="#dcdcdc" stroke-width="1.4" stroke-dasharray="1.8 1.6"/>
<!-- magic wand -->
<path d="M449 39L456 32" stroke="#e6e6e6" stroke-width="2.6" stroke-linecap="round"/>
<circle cx="457.5" cy="30.5" r="1.8" fill="#e6e6e6"/>
<path d="M457.5 25.5V27.5M460.5 27L459.3 28.5M462.5 30.5H460.5M455 27L456 28.5M460 33.5L459 32.5" stroke="#e6e6e6" stroke-width="1" stroke-linecap="round"/>
<!-- pencil select -->
<path d="M481.3 37.5V40H484M486 40H488M490 40H492M494 40H496.5V37.5M496.5 35.5V33.5M481.3 35.5V33.5M481.3 31.5V29.5M481.3 27.3H484M486 27.3H487" fill="none" stroke="#dcdcdc" stroke-width="1.3"/>
<path d="M490 35L497 26" stroke="#e6e6e6" stroke-width="3.6" stroke-linecap="round"/>
<path d="M487.7 37.5L488.6 33.4L491.8 35.6Z" fill="#e6e6e6"/>
<!-- eraser select -->
<path d="M515.5 37.5V40H518M520 40H522M524 40H526M528 40H530.5V37.5M515.5 35.5V33.5M515.5 31.5V29.5M515.5 27.3H518M520 27.3H521" fill="none" stroke="#dcdcdc" stroke-width="1.3"/>
<g transform="translate(527.5 29.5) rotate(-48)">
<rect x="-4.6" y="-5.4" width="9.2" height="10.8" fill="#e6e6e6" rx="0.8"/>
<rect x="-3.2" y="-4" width="6.4" height="5" fill="#222"/>
</g>
<!-- layout -->
<rect x="565.5" y="27.2" width="14" height="4.6" fill="none" stroke="#e6e6e6" stroke-width="1.4"/>
<path d="M565.5 34.5H571.8L570.6 39H565.5Z M574 34.5H579.5V39H572.7Z" fill="none" stroke="#e6e6e6" stroke-width="1.4"/>
<!-- select arrow -->
<path d="M605 35.5H601.8V27.4H609V31" fill="none" stroke="#e6e6e6" stroke-width="1.5"/>
<path d="M607.5 32L615 35.2L612.2 36.3L614.8 39L613.5 40L611 37.2L609.8 39.8Z" fill="#e6e6e6"/>
<!-- cubes -->
<g fill="none" stroke="#d8d8d8" stroke-width="1.3" stroke-linejoin="round">
<path d="M1022.9 23.3L1027.6 26V31.4L1022.9 34.1L1018.2 31.4V26Z M1018.2 26L1022.9 28.7L1027.6 26 M1022.9 28.7V34.1"/>
<path d="M1018 33.3L1022.7 36V41.4L1018 44.1L1013.3 41.4V36Z M1013.3 36L1018 38.7L1022.7 36 M1018 38.7V44.1"/>
<path d="M1028.1 33.3L1032.8 36V41.4L1028.1 44.1L1023.4 41.4V36Z M1023.4 36L1028.1 38.7L1032.8 36 M1028.1 38.7V44.1"/>
</g>
<!-- layers -->
<path d="M1056 24L1065.3 29.3L1056 34.7L1046.8 29.3Z" fill="#d8d8d8"/>
<path d="M1047.5 33L1056 38L1064.5 33M1047.5 37L1056 42L1064.5 37" fill="none" stroke="#d8d8d8" stroke-width="1.8" stroke-linejoin="round"/>
</svg>
<div class="txt" style="left:634px;top:24px;font-family:'Liberation Serif',serif;font-weight:700;font-size:19px;color:#e6e6e6">T</div>


<svg class="a" style="left:0;top:0" width="1080" height="809" viewBox="0 0 1080 809">
<!-- sidebar separators -->
<g fill="#3a3a3a">
<rect x="3" y="52" width="31" height="1"/>
<rect x="3" y="234" width="31" height="1"/>
<rect x="3" y="264" width="31" height="1"/>
<rect x="3" y="348" width="31" height="1"/>
<rect x="3" y="640" width="31" height="1"/>
</g>
<!-- pages -->
<path d="M14.5 68.7H25.5V84.5" fill="none" stroke="#d6d6d6" stroke-width="1.4"/>
<rect x="12" y="71" width="11.8" height="16" fill="#d6d6d6"/>
<path d="M14 74.5H21.5M14 78.5H21.5M14 82.3H21.5" stroke="#222" stroke-width="1.2"/>
<!-- selection list -->
<rect x="9.6" y="104.6" width="15" height="14.6" fill="none" stroke="#cfcfcf" stroke-width="1.2" stroke-dasharray="1.6 1.9"/>
<rect x="19" y="111" width="11" height="10" fill="#222"/>
<path d="M21 113H28.8M21 116.6H28.8M21 120.2H28.8" stroke="#d6d6d6" stroke-width="1.6"/>
<!-- rotate -->
<path d="M25.5 152.5A8.3 8.3 0 1 1 27.7 146" fill="none" stroke="#d6d6d6" stroke-width="2.4"/>
<path d="M24 150.5L29.8 150.5L26.6 155.5Z" fill="#d6d6d6"/>
<path d="M18.8 143.2L22.7 147.2L18.8 151.1L14.9 147.2Z" fill="#d6d6d6"/>
<!-- ruler -->
<g transform="translate(19.2 181.5) rotate(-38)">
<rect x="-9.3" y="-4.2" width="18.6" height="8.4" fill="none" stroke="#d6d6d6" stroke-width="1.6" rx="0.6"/>
<path d="M-5.5 -4V-0.5M-2.5 -4V0.8M0.5 -4V-0.5M3.5 -4V0.8M6.5 -4V-0.5" stroke="#d6d6d6" stroke-width="1.2"/>
</g>
<!-- pen blue -->
<path d="M20.6 209.2L22.6 207.4C23.2 206.9 24 206.9 24.5 207.4L29.2 212.2C29.7 212.8 29.7 213.6 29.1 214.1L27 216Z" fill="#3e9fce"/>
<path d="M18.4 211.2L25.6 218.4L15.4 221.6Z" fill="#3aa3d6"/>
<path d="M14.6 221L16.2 222.6L14.8 223.2Z" fill="#9ac8d8"/>
<path d="M13.2 217C11 217.6 9.4 219 9.4 220.6C9.4 222.2 10.6 223.6 12 224.6" fill="none" stroke="#5aaec8" stroke-width="1.6" stroke-linecap="round"/>
<!-- color icon (fg/bg) -->
<rect x="8.6" y="278.5" width="21.2" height="21.2" rx="3.2" fill="#5aa8e0" stroke="#d0e2f0" stroke-width="1.2"/>
<rect x="14.8" y="284.7" width="13.3" height="13" rx="1.2" fill="#000"/>
<rect x="10.2" y="280.1" width="13.6" height="13.5" rx="1.4" fill="#000" stroke="#d0e2f0" stroke-width="0.9"/>
<!-- list blue -->
<g fill="#3aa0d0">
<rect x="9" y="315" width="5" height="5"/>
<rect x="17.8" y="315.5" width="11.2" height="3.4"/>
<rect x="17.8" y="322" width="11.2" height="3.4"/>
<rect x="17.8" y="328.8" width="11.2" height="3.4"/>
</g>
<!-- hand -->
<path d="M13.5 665.5C12.5 664.2 10.8 663.3 11.3 662.7C12 661.7 13.6 663.2 14.4 664L14.4 658.2C14.4 657 16 657 16 658.2V663.2L16.3 656.5C16.3 655.3 18 655.3 18 656.5L18.2 663L19.4 657C19.6 655.8 21.2 656 21.1 657.2L20.8 663.4L22.6 659.3C23 658.2 24.5 658.7 24.2 659.8L23.2 665.5C22.6 669 21.5 672 18.5 672.6C16 673 14.8 672 13.5 665.5Z" fill="#e8e8e8"/>
<!-- eyedropper -->
<path d="M13.2 705.5L21.6 697.1" stroke="#e8e8e8" stroke-width="4.4" stroke-linecap="round"/>
<path d="M14.2 704.4L21 697.6" stroke="#222" stroke-width="1.6" stroke-linecap="round"/>
<path d="M20.3 694.2L24.9 698.8M22.3 694.6L24.6 692.3M25 697L23 695" stroke="#e8e8e8" stroke-width="2" stroke-linecap="round"/>
<!-- redo gray -->
<path d="M12 739C12.5 733.5 16 731.5 21 731.5V728.8L26.8 733.8L21 738.8V736C17 736 14 736.8 12 739Z" fill="#6c6c6c"/>
<!-- undo -->
<path d="M26.6 775C26.1 769.5 22.6 767.5 17.6 767.5V764.8L11.8 769.8L17.6 774.8V772C21.6 772 24.6 772.8 26.6 775Z" fill="#e8e8e8"/>
</svg>


<svg class="a" style="left:0;top:0" width="1080" height="809" viewBox="0 0 1080 809">
<!-- plus -->
<path d="M61 64.5V78.7M53.8 71.6H68.2" stroke="#4a90c8" stroke-width="1.3"/>
<!-- trash -->
<g fill="none" stroke="#3a3a3a" stroke-width="1">
<path d="M197.5 64.5H212.5M201.8 64.5V62.3H208.2V64.5M199 66L200.3 80.5H209.7L211 66M202.5 67.5V79M205 67.5V79M207.5 67.5V79"/>
</g>
<!-- color row -->
<rect x="43.8" y="91.5" width="36" height="33.5" fill="#c73a35"/>
<rect x="47.6" y="95.3" width="28.4" height="26" fill="#555"/>
<rect x="47.9" y="95.5" width="24.2" height="23.5" fill="#000"/>
<rect x="60" y="106.9" width="15.8" height="15.7" fill="#000"/>
<defs><pattern id="chk" x="89.2" y="95.5" width="4" height="4" patternUnits="userSpaceOnUse"><rect width="4" height="4" fill="#fff"/><rect width="2" height="2" fill="#e4e4e4"/><rect x="2" y="2" width="2" height="2" fill="#e4e4e4"/></pattern></defs>
<rect x="89.2" y="95.5" width="27.2" height="27.1" fill="url(#chk)"/>
<path d="M204.5 110.5H207.5M209.5 110.5H212.5M214.5 110.5H217.5" stroke="#cfcfcf" stroke-width="1.3"/>
<!-- grid -->
<rect x="44" y="127.5" width="178" height="148" fill="#0a0a0a"/>
<rect x="45.7" y="129.2" width="27.9" height="27.9" fill="#3d5673"/><rect x="74.9" y="129.2" width="27.9" height="27.9" fill="#5b7189"/><rect x="104.1" y="129.2" width="27.9" height="27.9" fill="#405c7a"/><rect x="133.3" y="129.2" width="27.9" height="27.9" fill="#2a333b"/><rect x="162.5" y="129.2" width="27.9" height="27.9" fill="#9ab0be"/><rect x="191.7" y="129.2" width="27.9" height="27.9" fill="#5a6165"/><rect x="45.7" y="158.4" width="27.9" height="27.9" fill="#e2e2e0"/><rect x="74.9" y="158.4" width="27.9" height="27.9" fill="#7c765f"/><rect x="104.1" y="158.4" width="27.9" height="27.9" fill="#a18e90"/><rect x="133.3" y="158.4" width="27.9" height="27.9" fill="#37322d"/><rect x="162.5" y="158.4" width="27.9" height="27.9" fill="#514948"/><rect x="191.7" y="158.4" width="27.9" height="27.9" fill="#795f60"/><rect x="45.7" y="187.6" width="27.9" height="27.9" fill="#252120"/><rect x="74.9" y="187.6" width="27.9" height="27.9" fill="#d1c8c3"/><rect x="104.1" y="187.6" width="27.9" height="27.9" fill="#5a4f49"/><rect x="133.3" y="187.6" width="27.9" height="27.9" fill="#735a5b"/><rect x="162.5" y="187.6" width="27.9" height="27.9" fill="#342f2d"/><rect x="191.7" y="187.6" width="27.9" height="27.9" fill="#936455"/><rect x="45.7" y="216.8" width="27.9" height="27.9" fill="#8a5b5a"/><rect x="74.9" y="216.8" width="27.9" height="27.9" fill="#59292a"/><rect x="104.1" y="216.8" width="27.9" height="27.9" fill="#a99294"/><rect x="133.3" y="216.8" width="27.9" height="27.9" fill="#8b8b8b"/><rect x="162.5" y="216.8" width="27.9" height="27.9" fill="#a08f8c"/><rect x="191.7" y="216.8" width="27.9" height="27.9" fill="#5c4841"/><rect x="45.7" y="246.0" width="27.9" height="27.9" fill="#676d77"/><rect x="74.9" y="246.0" width="27.9" height="27.9" fill="#535a60"/><rect x="104.1" y="246.0" width="27.9" height="27.9" fill="#3e3a39"/><rect x="133.3" y="246.0" width="27.9" height="27.9" fill="#616161"/><rect x="162.5" y="246.0" width="27.9" height="27.9" fill="#636363"/><rect x="191.7" y="246.0" width="27.9" height="27.9" fill="#656565"/>
<!-- tabs -->
<circle cx="85.3" cy="292.5" r="9.6" fill="none" stroke="#8a8a8a" stroke-width="2"/>
<rect x="79.8" y="287" width="11" height="11" rx="1.5" fill="#8a8a8a"/>
<path d="M189.6 292.4A9.4 9.4 0 1 0 181.4 301.6L181.6 298.6C181.8 297 183 296.4 184.4 296.4H188.4C189.2 295.2 189.6 293.8 189.6 292.4Z" fill="#64a9de"/>
<g fill="#0d2233"><circle cx="177.6" cy="286.8" r="1.3"/><circle cx="182.8" cy="286.8" r="1.3"/><circle cx="174.4" cy="291" r="1.3"/><circle cx="185.8" cy="291" r="1.3"/></g>
<!-- row separators -->
<g fill="#6a6a6a">
<rect x="39" y="392" width="188" height="1"/>
<rect x="39" y="427" width="188" height="1"/>
<rect x="39" y="461.5" width="188" height="1"/>
</g>
<!-- toggles -->
<rect x="182.2" y="362.7" width="41" height="24.6" rx="12.3" fill="#4ccd5f"/>
<circle cx="210.9" cy="375" r="11" fill="#fafafa"/>
<rect x="182.2" y="431.9" width="41" height="24.6" rx="12.3" fill="#4ccd5f"/>
<circle cx="210.9" cy="444.2" r="11" fill="#fafafa"/>
<!-- stepper -->
<rect x="147.5" y="398.8" width="74" height="22.2" rx="3" fill="none" stroke="#c8c8c8" stroke-width="1"/>
<path d="M184.4 399V421" stroke="#c8c8c8" stroke-width="1"/>
<path d="M159.5 410H172.5M196.5 410H209.5M203 403.5V416.5" stroke="#e8e8e8" stroke-width="1.3"/>
<!-- bottom tabs -->
<path d="M76.3 761.8L67.5 770.6" stroke="#8a8a8a" stroke-width="3.4" stroke-linecap="round"/>
<circle cx="64.3" cy="772.6" r="2.9" fill="#8a8a8a"/>
<path d="M137.5 761L131 767.5" stroke="#8a8a8a" stroke-width="2.2" stroke-linecap="round"/>
<circle cx="128.5" cy="769" r="2" fill="#8a8a8a"/>
<g transform="translate(136.5 770)"><circle r="3.6" fill="none" stroke="#8a8a8a" stroke-width="2.2" stroke-dasharray="1.6 1.2"/><circle r="2.4" fill="none" stroke="#8a8a8a" stroke-width="1.4"/></g>
<g fill="#5a9fd6"><circle cx="188.7" cy="767.7" r="2.7"/><circle cx="195.7" cy="767.7" r="2.7"/><circle cx="202.7" cy="767.7" r="2.7"/></g>
</svg>
<div class="txt" style="left:75px;top:307.5px;font-size:8.5px;color:#a8a8a8">Color</div>
<div class="txt" style="left:168px;top:307.5px;font-size:8.5px;color:#6aaade">Paleta</div>
<div class="txt" style="left:44.4px;top:369.5px;font-size:10.4px;color:#f0f0f0">Suavizado de contorno</div>
<div class="txt" style="left:44.4px;top:404.5px;font-size:10.8px;color:#f0f0f0">Corrección</div>
<div class="txt" style="left:129.5px;top:404.5px;font-size:10.8px;color:#f0f0f0">13</div>
<div class="txt" style="left:44.4px;top:439.5px;font-size:9px;color:#f0f0f0">Mostrar el cursor de pincel</div>
<div class="txt" style="left:58px;top:782.5px;font-size:8.5px;color:#a8a8a8">Pincel</div>
<div class="txt" style="left:104px;top:783px;font-size:7.5px;color:#a8a8a8">Ajustes del pincel</div>
<div class="txt" style="left:188px;top:782.5px;font-size:8px;color:#5a9fd6">Más</div>


<!-- floating toolbar -->
<div class="a" style="left:393.5px;top:738.6px;width:293px;height:36.1px;background:#222;border-radius:2.5px"></div>
<div class="a" style="left:419.2px;top:777.5px;width:242.8px;height:15px;background:rgba(90,90,90,0.92);border-radius:1px"></div>
<div class="txt" style="left:434.7px;top:780.6px;font-size:9.4px;color:#ececec">3200*20000px 350dpi 28% -4° Pincel: 7.3px 100%</div>
<div class="a" style="left:404px;top:798.3px;width:272px;height:4.7px;background:#000;border-radius:3px"></div>
<svg class="a" style="left:0;top:0" width="1080" height="809" viewBox="0 0 1080 809">
<!-- undo -->
<path d="M419.4 761.2C418.9 756.8 415.8 754.6 411 754.6V751.6L404.6 756.4L411 761.2V758.4C414.6 758.4 417.4 759.2 419.4 761.2Z" fill="#e8e8e8"/>
<!-- redo -->
<path d="M438.6 761.2C439.1 756.8 442.2 754.6 447 754.6V751.6L453.4 756.4L447 761.2V758.4C443.4 758.4 440.6 759.2 438.6 761.2Z" fill="#6a6a6a"/>
<!-- brush swap -->
<path d="M485 748L476.8 756" stroke="#2b7aa6" stroke-width="3.8" stroke-linecap="round"/>
<path d="M471.2 759.6C471.6 757.6 473 756.2 475 756.6C476.4 757 476.4 758.6 475.2 759.6C474 760.6 472.4 760.6 471.2 759.6Z" fill="#2f87b3"/>
<g transform="translate(488.5 763.5) rotate(-40)"><rect x="-3" y="-3.6" width="6" height="7.2" fill="#bdbdbd" rx="0.6"/></g>
<path d="M487 753.5C489 754 490 755.5 490 757.5" fill="none" stroke="#8a8a8a" stroke-width="1.2"/>
<path d="M488.8 757.6L491.6 757.2L490.2 759.6Z" fill="#8a8a8a"/>
<path d="M482.5 766C480.5 765.5 479.3 764 479.3 762" fill="none" stroke="#8a8a8a" stroke-width="1.2"/>
<path d="M480.6 761.8L477.9 762.2L479.3 759.8Z" fill="#8a8a8a"/>
<!-- eyedropper -->
<path d="M511 762L518 755" stroke="#e8e8e8" stroke-width="4" stroke-linecap="round"/>
<path d="M511.9 761.1L517.5 755.5" stroke="#222" stroke-width="1.4" stroke-linecap="round"/>
<path d="M516.8 752.2L520.9 756.3M518.8 752.5L521 750.3M522.6 754.5L520.5 752.5" stroke="#e8e8e8" stroke-width="1.9" stroke-linecap="round"/>
<!-- download -->
<path d="M551 746.5V755.5" stroke="#e0e0e0" stroke-width="2.4"/>
<path d="M546 753.5H556L551 759Z" fill="#e0e0e0"/>
<rect x="541.5" y="761.2" width="19.3" height="5.2" fill="#d8d8d8"/>
<rect x="555.2" y="763" width="3" height="1.6" fill="#222"/>
<!-- resize -->
<rect x="576.6" y="750" width="13.6" height="15.6" fill="none" stroke="#e8e8e8" stroke-width="1.6"/>
<path d="M583 758.5L595 747.2M589.2 747.3H595.3V753.3M583 753.3V758.6H588.3" fill="none" stroke="#e8e8e8" stroke-width="1.6"/>
<!-- dividers -->
<rect x="608.3" y="740" width="1" height="33" fill="#383838"/>
<rect x="648.2" y="740" width="1" height="33" fill="#383838"/>
<!-- share -->
<rect x="622" y="750" width="13.5" height="13.7" rx="1.6" fill="#e8e8e8"/>
<path d="M625.2 761.5C625.4 757 627.6 754.6 630.4 754.3V752.2L633.8 755.4L630.4 758.6V756.6C628.2 756.8 626.4 758.6 625.2 761.5Z" fill="#222"/>
<!-- grid dots -->
<g fill="#cfcfcf">
<rect x="663.2" y="750.2" width="1.4" height="1.4"/><rect x="663.2" y="754.2" width="1.4" height="1.4"/><rect x="663.2" y="758.2" width="1.4" height="1.4"/><rect x="663.2" y="762.2" width="1.4" height="1.4"/><rect x="666.3" y="750.2" width="1.4" height="1.4"/><rect x="666.3" y="754.2" width="1.4" height="1.4"/><rect x="666.3" y="758.2" width="1.4" height="1.4"/><rect x="666.3" y="762.2" width="1.4" height="1.4"/><rect x="669.4" y="750.2" width="1.4" height="1.4"/><rect x="669.4" y="754.2" width="1.4" height="1.4"/><rect x="669.4" y="758.2" width="1.4" height="1.4"/><rect x="669.4" y="762.2" width="1.4" height="1.4"/><rect x="672.5" y="750.2" width="1.4" height="1.4"/><rect x="672.5" y="754.2" width="1.4" height="1.4"/><rect x="672.5" y="758.2" width="1.4" height="1.4"/><rect x="672.5" y="762.2" width="1.4" height="1.4"/>
</g>
</svg>

</body></html>
